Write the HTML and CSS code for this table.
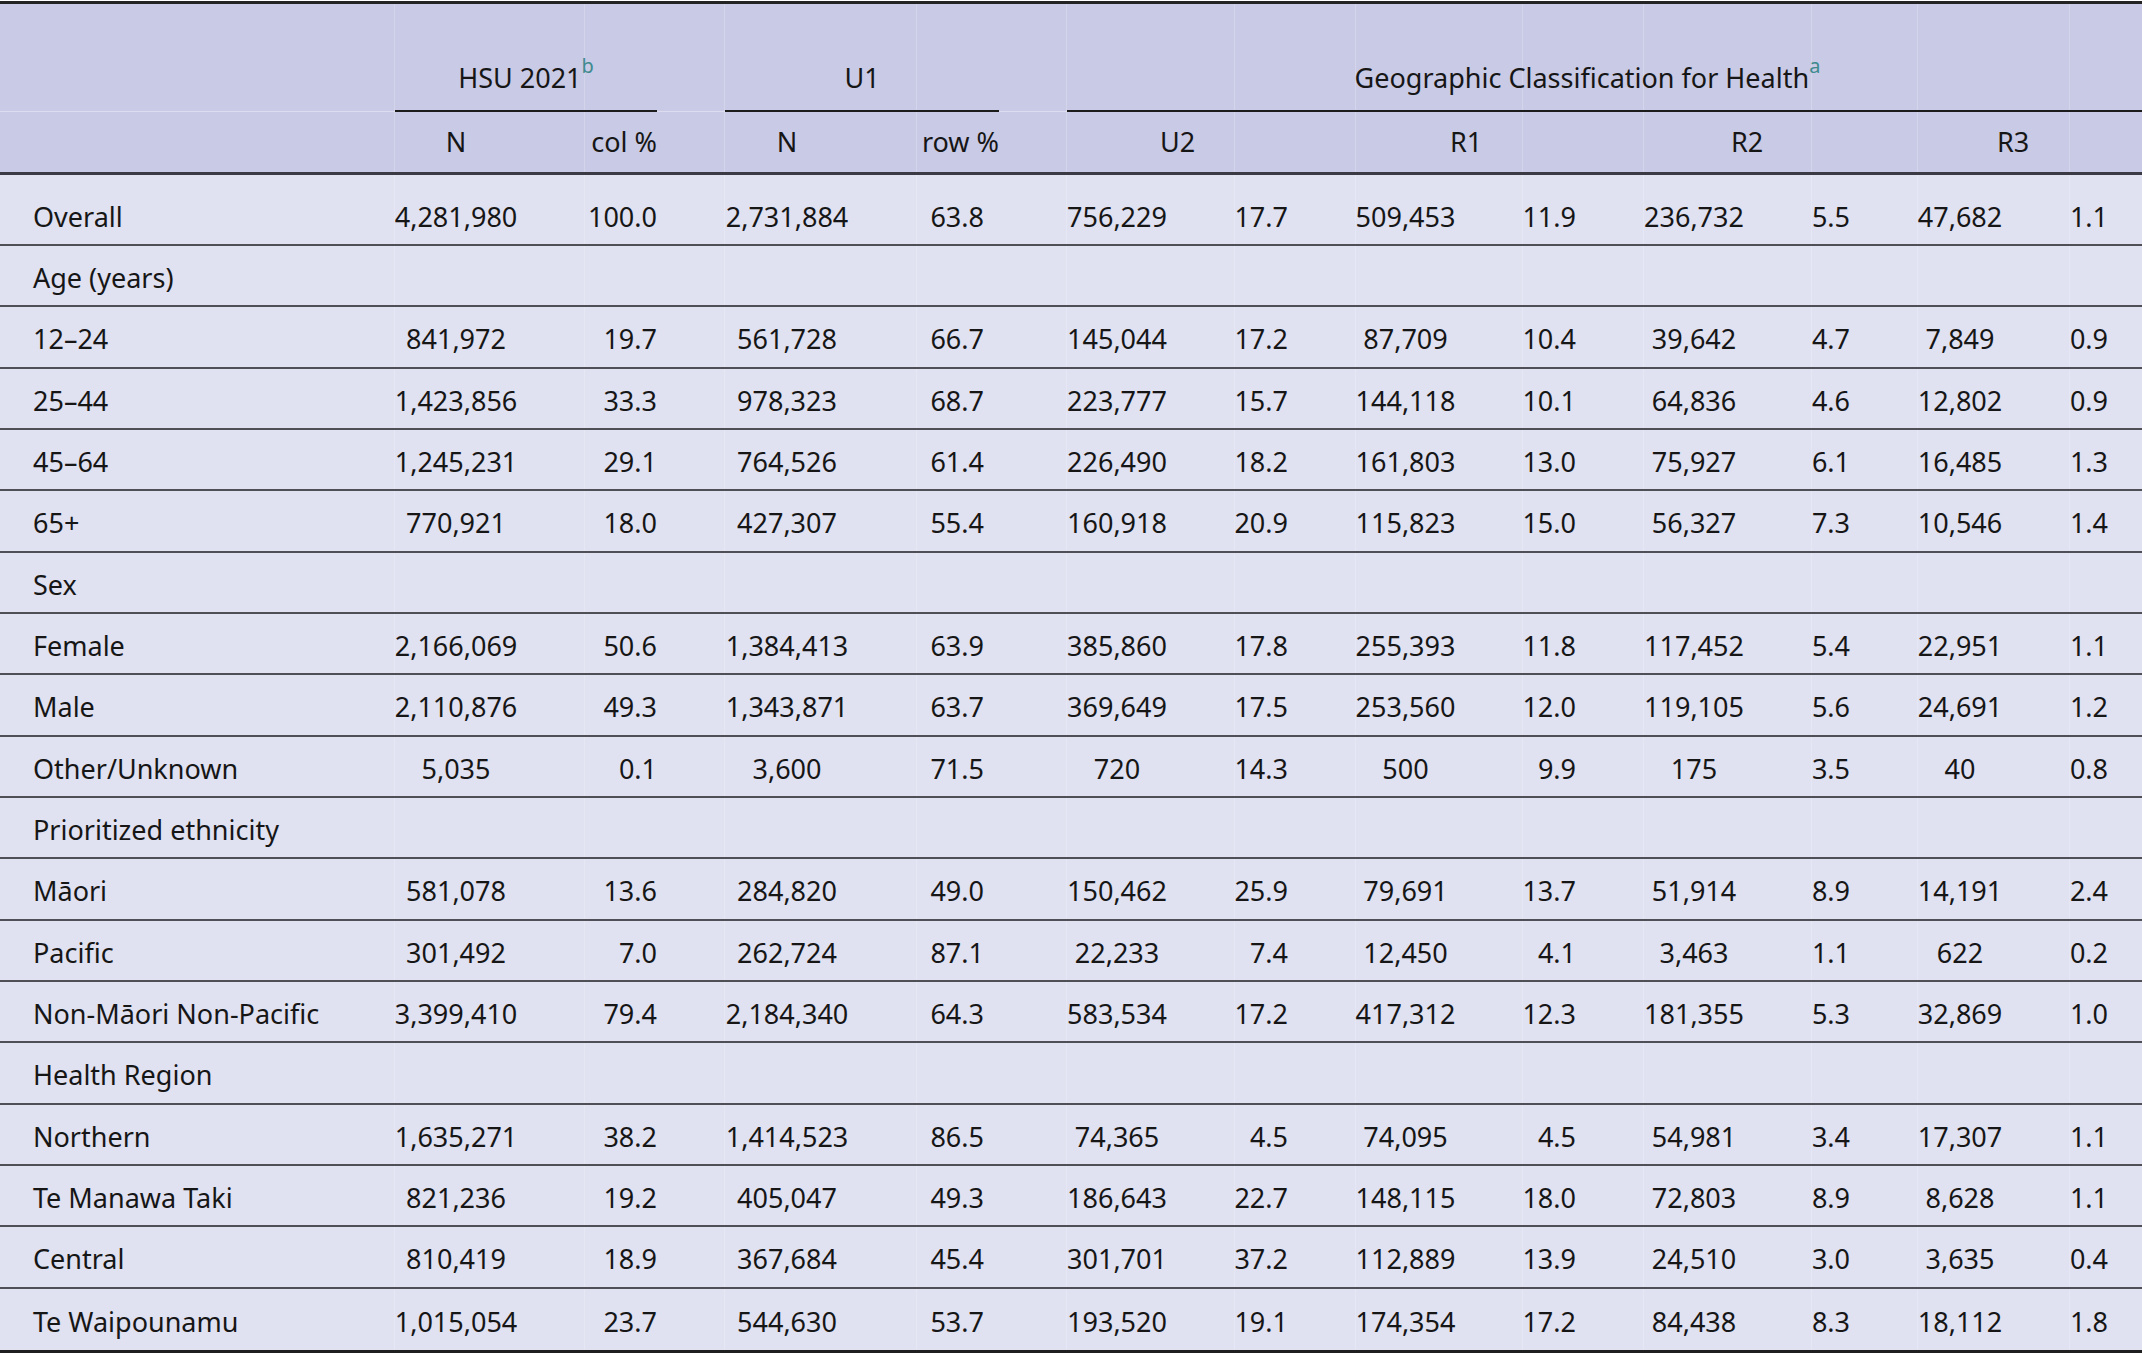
FILE: index.html
```html
<!DOCTYPE html>
<html lang="en">
<head>
<meta charset="utf-8">
<title>Geographic Classification for Health</title>
<link rel="stylesheet" href="styles.css">
</head>
<body>
<div class="tbl" role="table">
  <div class="row hdr1" role="row">
    <div class="c lab"></div>
    <div class="c span2 spanner"><div class="sp">HSU 2021<sup>b</sup></div></div>
    <div class="c span2 spanner"><div class="sp">U1</div></div>
    <div class="c geo spanner"><div class="sp">Geographic Classification for Health<sup>a</sup></div></div>
  </div>
  <div class="row hdr2" role="row">
    <div class="c lab"></div>
    <div class="c n">N</div>
    <div class="c p">col %</div>
    <div class="c n">N</div>
    <div class="c p">row %</div>
    <div class="c span2 n">U2</div>
    <div class="c span2 n">R1</div>
    <div class="c span2 n">R2</div>
    <div class="c span2 n last">R3</div>
  </div>

  <div class="row body first" role="row"><div class="c lab">Overall</div><div class="c n">4,281,980</div><div class="c p">100.0</div><div class="c n">2,731,884</div><div class="c p rp">63.8</div><div class="c n">756,229</div><div class="c p">17.7</div><div class="c n">509,453</div><div class="c p">11.9</div><div class="c n">236,732</div><div class="c p">5.5</div><div class="c n">47,682</div><div class="c p last">1.1</div></div>

  <div class="row body" role="row"><div class="c lab full">Age (years)</div></div>
  <div class="row body" role="row"><div class="c lab">12–24</div><div class="c n">841,972</div><div class="c p">19.7</div><div class="c n">561,728</div><div class="c p rp">66.7</div><div class="c n">145,044</div><div class="c p">17.2</div><div class="c n">87,709</div><div class="c p">10.4</div><div class="c n">39,642</div><div class="c p">4.7</div><div class="c n">7,849</div><div class="c p last">0.9</div></div>
  <div class="row body" role="row"><div class="c lab">25–44</div><div class="c n">1,423,856</div><div class="c p">33.3</div><div class="c n">978,323</div><div class="c p rp">68.7</div><div class="c n">223,777</div><div class="c p">15.7</div><div class="c n">144,118</div><div class="c p">10.1</div><div class="c n">64,836</div><div class="c p">4.6</div><div class="c n">12,802</div><div class="c p last">0.9</div></div>
  <div class="row body" role="row"><div class="c lab">45–64</div><div class="c n">1,245,231</div><div class="c p">29.1</div><div class="c n">764,526</div><div class="c p rp">61.4</div><div class="c n">226,490</div><div class="c p">18.2</div><div class="c n">161,803</div><div class="c p">13.0</div><div class="c n">75,927</div><div class="c p">6.1</div><div class="c n">16,485</div><div class="c p last">1.3</div></div>
  <div class="row body" role="row"><div class="c lab">65+</div><div class="c n">770,921</div><div class="c p">18.0</div><div class="c n">427,307</div><div class="c p rp">55.4</div><div class="c n">160,918</div><div class="c p">20.9</div><div class="c n">115,823</div><div class="c p">15.0</div><div class="c n">56,327</div><div class="c p">7.3</div><div class="c n">10,546</div><div class="c p last">1.4</div></div>

  <div class="row body" role="row"><div class="c lab full">Sex</div></div>
  <div class="row body" role="row"><div class="c lab">Female</div><div class="c n">2,166,069</div><div class="c p">50.6</div><div class="c n">1,384,413</div><div class="c p rp">63.9</div><div class="c n">385,860</div><div class="c p">17.8</div><div class="c n">255,393</div><div class="c p">11.8</div><div class="c n">117,452</div><div class="c p">5.4</div><div class="c n">22,951</div><div class="c p last">1.1</div></div>
  <div class="row body" role="row"><div class="c lab">Male</div><div class="c n">2,110,876</div><div class="c p">49.3</div><div class="c n">1,343,871</div><div class="c p rp">63.7</div><div class="c n">369,649</div><div class="c p">17.5</div><div class="c n">253,560</div><div class="c p">12.0</div><div class="c n">119,105</div><div class="c p">5.6</div><div class="c n">24,691</div><div class="c p last">1.2</div></div>
  <div class="row body" role="row"><div class="c lab">Other/Unknown</div><div class="c n">5,035</div><div class="c p">0.1</div><div class="c n">3,600</div><div class="c p rp">71.5</div><div class="c n">720</div><div class="c p">14.3</div><div class="c n">500</div><div class="c p">9.9</div><div class="c n">175</div><div class="c p">3.5</div><div class="c n">40</div><div class="c p last">0.8</div></div>

  <div class="row body" role="row"><div class="c lab full">Prioritized ethnicity</div></div>
  <div class="row body" role="row"><div class="c lab">Māori</div><div class="c n">581,078</div><div class="c p">13.6</div><div class="c n">284,820</div><div class="c p rp">49.0</div><div class="c n">150,462</div><div class="c p">25.9</div><div class="c n">79,691</div><div class="c p">13.7</div><div class="c n">51,914</div><div class="c p">8.9</div><div class="c n">14,191</div><div class="c p last">2.4</div></div>
  <div class="row body" role="row"><div class="c lab">Pacific</div><div class="c n">301,492</div><div class="c p">7.0</div><div class="c n">262,724</div><div class="c p rp">87.1</div><div class="c n">22,233</div><div class="c p">7.4</div><div class="c n">12,450</div><div class="c p">4.1</div><div class="c n">3,463</div><div class="c p">1.1</div><div class="c n">622</div><div class="c p last">0.2</div></div>
  <div class="row body" role="row"><div class="c lab">Non-Māori Non-Pacific</div><div class="c n">3,399,410</div><div class="c p">79.4</div><div class="c n">2,184,340</div><div class="c p rp">64.3</div><div class="c n">583,534</div><div class="c p">17.2</div><div class="c n">417,312</div><div class="c p">12.3</div><div class="c n">181,355</div><div class="c p">5.3</div><div class="c n">32,869</div><div class="c p last">1.0</div></div>

  <div class="row body" role="row"><div class="c lab full">Health Region</div></div>
  <div class="row body" role="row"><div class="c lab">Northern</div><div class="c n">1,635,271</div><div class="c p">38.2</div><div class="c n">1,414,523</div><div class="c p rp">86.5</div><div class="c n">74,365</div><div class="c p">4.5</div><div class="c n">74,095</div><div class="c p">4.5</div><div class="c n">54,981</div><div class="c p">3.4</div><div class="c n">17,307</div><div class="c p last">1.1</div></div>
  <div class="row body" role="row"><div class="c lab">Te Manawa Taki</div><div class="c n">821,236</div><div class="c p">19.2</div><div class="c n">405,047</div><div class="c p rp">49.3</div><div class="c n">186,643</div><div class="c p">22.7</div><div class="c n">148,115</div><div class="c p">18.0</div><div class="c n">72,803</div><div class="c p">8.9</div><div class="c n">8,628</div><div class="c p last">1.1</div></div>
  <div class="row body" role="row"><div class="c lab">Central</div><div class="c n">810,419</div><div class="c p">18.9</div><div class="c n">367,684</div><div class="c p rp">45.4</div><div class="c n">301,701</div><div class="c p">37.2</div><div class="c n">112,889</div><div class="c p">13.9</div><div class="c n">24,510</div><div class="c p">3.0</div><div class="c n">3,635</div><div class="c p last">0.4</div></div>
  <div class="row body lastrow" role="row"><div class="c lab">Te Waipounamu</div><div class="c n">1,015,054</div><div class="c p">23.7</div><div class="c n">544,630</div><div class="c p rp">53.7</div><div class="c n">193,520</div><div class="c p">19.1</div><div class="c n">174,354</div><div class="c p">17.2</div><div class="c n">84,438</div><div class="c p">8.3</div><div class="c n">18,112</div><div class="c p last">1.8</div></div>
</div>
</body>
</html>
```
FILE: styles.css
```css
html, body {
  margin: 0;
  padding: 0;
  background: #ffffff;
}

body {
  font-family: "Noto Sans", "Open Sans", sans-serif;
  font-size: 27px;
  color: #161616;
  overflow: hidden;
}

.tbl {
  --cols: 395px 190px 140px 192px 150px 168px 121px 167px 121px 168px 106px 152px 72px;
  --vl: rgba(255, 255, 255, 0.2);
  width: 2142px;
  margin-top: 1px;
  border-top: 3px solid #232323;
  background:
    linear-gradient(to right,
      transparent 394px, var(--vl) 394px, var(--vl) 395px, transparent 395px,
      transparent 584px, var(--vl) 584px, var(--vl) 585px, transparent 585px,
      transparent 724px, var(--vl) 724px, var(--vl) 725px, transparent 725px,
      transparent 916px, var(--vl) 916px, var(--vl) 917px, transparent 917px,
      transparent 1066px, var(--vl) 1066px, var(--vl) 1067px, transparent 1067px,
      transparent 1234px, var(--vl) 1234px, var(--vl) 1235px, transparent 1235px,
      transparent 1355px, var(--vl) 1355px, var(--vl) 1356px, transparent 1356px,
      transparent 1522px, var(--vl) 1522px, var(--vl) 1523px, transparent 1523px,
      transparent 1643px, var(--vl) 1643px, var(--vl) 1644px, transparent 1644px,
      transparent 1811px, var(--vl) 1811px, var(--vl) 1812px, transparent 1812px,
      transparent 1917px, var(--vl) 1917px, var(--vl) 1918px, transparent 1918px,
      transparent 2069px, var(--vl) 2069px, var(--vl) 2070px, transparent 2070px),
    linear-gradient(to bottom, #c9cae5 0, #c9cae5 171px, #e0e1f1 171px);
}

.row {
  display: grid;
  grid-template-columns: var(--cols);
  box-sizing: border-box;
  height: 61.33px;
  border-bottom: 2px solid #4f4f58;
}

.c {
  display: flex;
  align-items: center;
  box-sizing: border-box;
  white-space: nowrap;
  line-height: 36px;
}

.body .c {
  padding-top: 5px;
}

.lab {
  padding-left: 33px;
  justify-content: flex-start;
}

.full {
  grid-column: 1 / -1;
}

.n {
  justify-content: center;
  padding-right: 68px;
}

.p {
  justify-content: flex-end;
  padding-right: 68px;
}

.rp {
  padding-right: 83px;
}

.last {
  padding-right: 34px;
}

.span2 {
  grid-column: span 2;
}

/* header */
.hdr1 {
  height: 108px;
  border-bottom: 1px solid rgba(255, 255, 255, 0.35);
}

.spanner {
  align-items: flex-end;
  padding-right: 68px;
}

.geo {
  grid-column: 6 / -1;
  padding-right: 0;
}

.sp {
  flex: 1;
  text-align: center;
  padding-bottom: 14px;
  border-bottom: 2px solid #1c1c1c;
  margin-bottom: -1px;
}

.geo .sp {
  padding-right: 34px;
}

sup {
  color: #3f8a8f;
  font-size: 20px;
  line-height: 0;
  vertical-align: 15px;
}

.hdr2 {
  height: 63px;
  border-bottom: 3px solid #3a3a44;
}

.hdr2 .c {
  padding-bottom: 1px;
}

.first {
  height: 71px;
}

.body.first .c {
  padding-top: 15px;
}

.lastrow {
  height: 64.33px;
  border-bottom: 3px solid #1f1f1f;
}
```
